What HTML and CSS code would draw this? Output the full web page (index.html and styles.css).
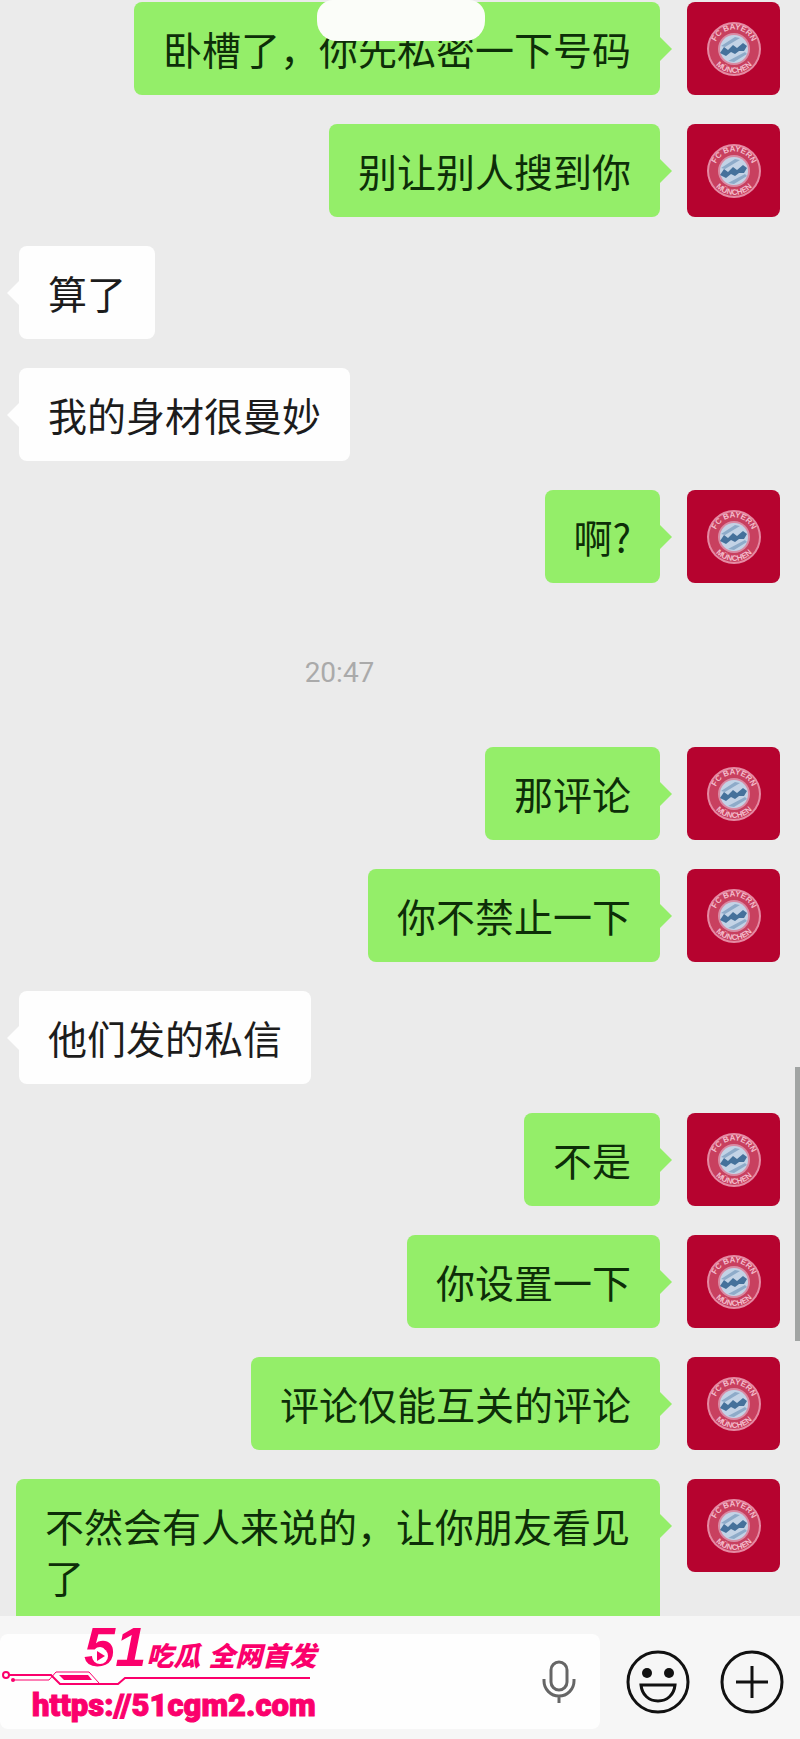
FILE: index.html
```html
<!DOCTYPE html>
<html lang="zh-CN">
  <head>
    <meta charset="UTF-8" />
    <meta
      name="viewport"
      content="width=device-width, initial-scale=1.0"
    />
    <title>聊天</title>
    <link rel="stylesheet" href="styles.css">
  </head>
  <body>
    <main class="chat">
      <ul class="messages">
        <li class="message sent">
          <p class="bubble">卧槽了，你先私密一下号码</p>
          <div class="avatar">
            <!-- club badge, the other avatars reuse it -->
            <svg viewBox="0 0 56 56">
              <g id="badge">
                <path id="arcTop" d="M8.5 28a19.500 19.500 0 0 1 39 0" fill="none" />
                <path id="arcBottom" d="M4 28a24 24 0 0 0 48 0" fill="none" />
                <circle cx="28" cy="28" r="27" fill="#e58aa3" />
                <circle cx="28" cy="28" r="25" fill="#c8405f" />
                <circle cx="28" cy="28" r="16" fill="#d98ba4" />
                <circle cx="28" cy="28" r="14" fill="#c3d3e6" />
                <path d="M15 25l14-9 5 1-15 9zM22 40l17-9 2 2-13 8z" fill="#8eabc9" />
                <path d="M14 32l4-6 4 3 5-5 4 3 6-5 4 3-3 5-5 0-4 3-4-2-5 4z" fill="#45719b" />
                <g font-family="Liberation Sans" font-weight="bold" font-size="8" fill="#f3bccb" text-anchor="middle">
                  <text><textPath href="#arcTop" startOffset="50%">FC BAYERN</textPath></text>
                  <text><textPath href="#arcBottom" startOffset="50%">MÜNCHEN</textPath></text>
                </g>
              </g>
            </svg>
          </div>
        </li>
        <li class="message sent">
          <p class="bubble">别让别人搜到你</p>
          <div class="avatar"><svg viewBox="0 0 56 56"><use href="#badge" /></svg></div>
        </li>
        <li class="message received">
          <p class="bubble">算了</p>
        </li>
        <li class="message received">
          <p class="bubble">我的身材很曼妙</p>
        </li>
        <li class="message sent">
          <p class="bubble">啊?</p>
          <div class="avatar"><svg viewBox="0 0 56 56"><use href="#badge" /></svg></div>
        </li>
        <li class="time"><time>20:47</time></li>
        <li class="message sent">
          <p class="bubble">那评论</p>
          <div class="avatar"><svg viewBox="0 0 56 56"><use href="#badge" /></svg></div>
        </li>
        <li class="message sent">
          <p class="bubble">你不禁止一下</p>
          <div class="avatar"><svg viewBox="0 0 56 56"><use href="#badge" /></svg></div>
        </li>
        <li class="message received">
          <p class="bubble">他们发的私信</p>
        </li>
        <li class="message sent">
          <p class="bubble">不是</p>
          <div class="avatar"><svg viewBox="0 0 56 56"><use href="#badge" /></svg></div>
        </li>
        <li class="message sent">
          <p class="bubble">你设置一下</p>
          <div class="avatar"><svg viewBox="0 0 56 56"><use href="#badge" /></svg></div>
        </li>
        <li class="message sent">
          <p class="bubble">评论仅能互关的评论</p>
          <div class="avatar"><svg viewBox="0 0 56 56"><use href="#badge" /></svg></div>
        </li>
        <li class="message sent">
          <p class="bubble">不然会有人来说的，让你朋友看见了</p>
          <div class="avatar"><svg viewBox="0 0 56 56"><use href="#badge" /></svg></div>
        </li>
      </ul>
      <div class="cover"></div>
      <div class="scroll-thumb"></div>
    </main>

    <footer class="composer">
      <div class="field">
        <input type="text" class="field-input" aria-label="输入消息" />
        <button type="button" class="mic" aria-label="语音输入">
          <svg width="34" height="44" viewBox="0 0 34 44" fill="none" stroke="#666" stroke-width="3">
            <rect x="9" y="2" width="16" height="28" rx="8" />
            <path d="M2 19v2a15 15 0 0 0 30 0v-2M17 36v7" />
          </svg>
        </button>
      </div>
      <button type="button" class="round" aria-label="表情">
        <svg width="64" height="64" viewBox="0 0 64 64" fill="none" stroke="#111" stroke-width="3">
          <circle cx="32" cy="32" r="30" />
          <circle cx="21" cy="23" r="5" fill="#111" stroke="none" />
          <circle cx="43" cy="23" r="5" fill="#111" stroke="none" />
          <path d="M15 35h34c-1 10-8 16-17 16s-16-6-17-16z" />
        </svg>
      </button>
      <button type="button" class="round" aria-label="更多">
        <svg width="64" height="64" viewBox="0 0 64 64" fill="none" stroke="#111" stroke-width="3">
          <circle cx="32" cy="32" r="30" />
          <path d="M16 32h32M32 16v32" />
        </svg>
      </button>

      <div class="watermark">
        <div class="brand">
          <span class="brand-number">51</span>
          <span>吃瓜</span>
          <span>全网首发</span>
          <svg class="play" width="16" height="16" viewBox="0 0 16 16">
            <circle cx="8" cy="8" r="8" fill="#fff" />
            <path d="M5 3l8 5-8 5z" fill="#fb006c" />
          </svg>
        </div>
        <svg class="circuit" width="312" height="16" viewBox="0 0 312 16" fill="none" stroke="#fb006c">
          <circle cx="4" cy="4" r="3" stroke-width="2" />
          <path d="M7 4h42l9 9h58l7-6h185" stroke-width="2" />
          <path d="M12 9h35l7-8h33l10 11" />
          <circle cx="11" cy="9" r="2" fill="#fb006c" stroke="none" />
          <path d="M57 4h29l4 5H62z" fill="#fb006c" stroke="none" />
        </svg>
        <a class="site" href="https://51cgm2.com">https://51cgm2.com</a>
      </div>
    </footer>
  </body>
</html>
```

FILE: styles.css
```css
* {
  padding: 0;
  margin: 0;
  box-sizing: border-box;
}

body {
  height: 100vh;
  display: flex;
  flex-direction: column;
  background-color: #ebebeb;
  font-family: "Noto Sans CJK SC", sans-serif;
}

button {
  border: none;
  background: none;
}

svg {
  display: block;
}

/* messages */
.chat {
  position: relative;
  flex: 1;
  min-height: 0;
  overflow: hidden;
}

.messages {
  list-style: none;
  display: flex;
  flex-direction: column;
  gap: 29px;
  padding: 2px 20px 0 16px;
}

.message {
  display: flex;
  align-items: flex-start;
  gap: 27px;
}

.sent {
  justify-content: flex-end;
}

.received {
  padding-left: 3px;
}

.bubble {
  position: relative;
  padding: 21px 29px;
  border-radius: 8px;
  font-size: 39px;
  line-height: 51px;
  color: #1c1c1c;
}

.sent .bubble {
  background-color: #94ee69;
  color: #0d2e08;
}

.received .bubble {
  background-color: #fefefe;
}

/* little arrow on the side of the bubble */
.bubble::after {
  content: "";
  position: absolute;
  top: 35px;
  border: 12px solid transparent;
}

.sent .bubble::after {
  left: 100%;
  border-right-width: 0;
  border-left-color: #94ee69;
}

.received .bubble::after {
  right: 100%;
  border-left-width: 0;
  border-right-color: #fefefe;
}

.avatar {
  flex: none;
  width: 93px;
  height: 93px;
  display: flex;
  align-items: center;
  justify-content: center;
  border-radius: 8px;
  background-color: #b6032f;
}

.avatar svg {
  width: 56px;
  height: 56px;
}

.time {
  padding: 40px 117px 24px 0;
  text-align: center;
  font-family: Roboto, sans-serif;
  font-size: 28px;
  line-height: 42px;
  color: #aaa;
}

.cover {
  position: absolute;
  top: 0;
  left: 317px;
  width: 168px;
  height: 41px;
  border-radius: 16px 16px 20px 20px;
  background-color: #fbfdf9;
}

.scroll-thumb {
  position: absolute;
  top: 66%;
  right: 0;
  width: 5px;
  height: 17%;
  background-color: #a1a4a3;
}

/* bottom bar */
.composer {
  position: relative;
  display: flex;
  align-items: center;
  gap: 30px;
  padding: 18px 16px 10px 0;
  background-color: #f6f6f6;
}

.field {
  flex: 1;
  display: flex;
  align-items: center;
  height: 95px;
  margin-right: -4px;
  padding-right: 24px;
  border-radius: 8px;
  background-color: #fefefe;
}

.field-input {
  flex: 1;
  min-width: 0;
  height: 100%;
  border: none;
  outline: none;
  background: none;
  font-size: 39px;
}

.watermark {
  position: absolute;
  left: 2px;
  top: 4px;
  color: #fb006c;
}

.brand {
  position: relative;
  display: flex;
  align-items: baseline;
  height: 51px;
  padding-left: 82px;
  font-size: 27px;
  font-weight: 900;
  font-style: italic;
  line-height: 53px;
}

.brand span + span + span {
  margin-left: 8px;
}

.brand-number {
  font-family: "Liberation Sans", sans-serif;
  font-size: 56px;
}

.play {
  position: absolute;
  left: 90px;
  top: 28px;
}

.site {
  display: block;
  padding-left: 30px;
  font-family: Roboto, sans-serif;
  font-size: 31px;
  font-weight: 900;
  line-height: 38px;
  color: #fb006c;
  text-decoration: none;
  -webkit-text-stroke: 1px #fb006c;
}
```
